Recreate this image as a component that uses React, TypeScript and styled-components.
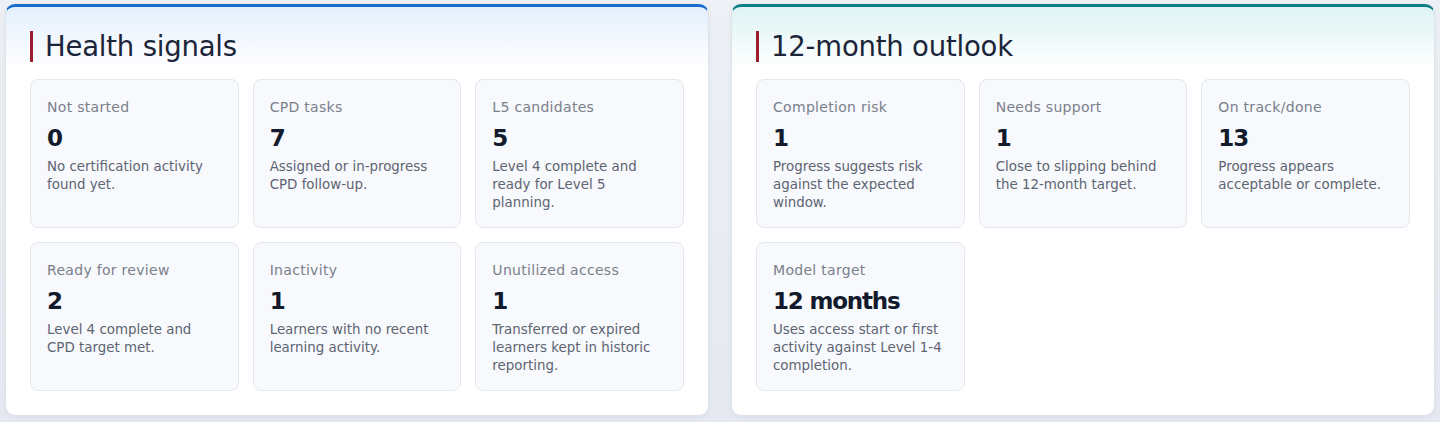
import styled, { createGlobalStyle } from "styled-components";

const GlobalStyle = createGlobalStyle`
    html, body {
        margin: 0;
        padding: 0;
        background: #e8ecf2;
        font-family: "DejaVu Sans", "Noto Sans", sans-serif;
    }
`;

type Signal = {
    label: string;
    value: string;
    text: string;
};

const health: Signal[] = [
    { label: "Not started", value: "0", text: "No certification activity found yet." },
    { label: "CPD tasks", value: "7", text: "Assigned or in-progress CPD follow-up." },
    { label: "L5 candidates", value: "5", text: "Level 4 complete and ready for Level 5 planning." },
    { label: "Ready for review", value: "2", text: "Level 4 complete and CPD target met." },
    { label: "Inactivity", value: "1", text: "Learners with no recent learning activity." },
    { label: "Unutilized access", value: "1", text: "Transferred or expired learners kept in historic reporting." },
];

const outlook: Signal[] = [
    { label: "Completion risk", value: "1", text: "Progress suggests risk against the expected window." },
    { label: "Needs support", value: "1", text: "Close to slipping behind the 12-month target." },
    { label: "On track/done", value: "13", text: "Progress appears acceptable or complete." },
    { label: "Model target", value: "12 months", text: "Uses access start or first activity against Level 1-4 completion." },
];

const Panel = function({ title, accent, tint, items }: { title: string; accent: string; tint: string; items: Signal[] }) {
    return (
        <PanelWrap $accent={accent} $tint={tint}>
            <Title>{title}</Title>
            <Grid>
                {items.map((item) => (
                    <Card key={item.label}>
                        <Label>{item.label}</Label>
                        <Value>{item.value}</Value>
                        <Desc>{item.text}</Desc>
                    </Card>
                ))}
            </Grid>
        </PanelWrap>
    );
};

const App = function() {
    return (
        <>
            <GlobalStyle />
            <Page>
                <Panel title="Health signals" accent="#1a6bd0" tint="#e4effc" items={health} />
                <Panel title="12-month outlook" accent="#0f7f86" tint="#def3f3" items={outlook} />
            </Page>
        </>
    );
};

export default App;

const Page = styled.div`
    display: grid;
    grid-template-columns: 1fr 1fr;
    gap: 22px;
    padding: 4px 5px 6px 5px;
    height: 422px;
    box-sizing: border-box;
    background: linear-gradient(180deg, #edf1f6 0%, #e6eaf0 100%);
`;

const PanelWrap = styled.section<{ $accent: string; $tint: string }>`
    box-sizing: border-box;
    height: 412px;
    border: 1px solid #dde3eb;
    border-top: 3px solid ${(p) => p.$accent};
    border-radius: 10px;
    background: linear-gradient(180deg, ${(p) => p.$tint} 0px, #ffffff 62px);
    box-shadow: 0 2px 6px rgba(30, 45, 70, 0.06);
    padding: 24px 24px 24px 24px;
`;

const Title = styled.h2`
    margin: 0 0 17px 0;
    padding-left: 12px;
    border-left: 3px solid #9b1c2c;
    font-size: 27.5px;
    font-weight: 400;
    line-height: 31px;
    color: #1b2438;
    letter-spacing: -0.2px;
`;

const Grid = styled.div`
    display: grid;
    grid-template-columns: repeat(3, 1fr);
    grid-auto-rows: 149px;
    gap: 14px;
`;

const Card = styled.div`
    box-sizing: border-box;
    background: #f7f9fc;
    border: 1px solid #e3e8ef;
    border-radius: 8px;
    padding: 17px 16px 16px 16px;
    display: flex;
    flex-direction: column;
`;

const Label = styled.div`
    font-size: 14px;
    line-height: 20px;
    letter-spacing: 0.3px;
    color: #7a808b;
`;

const Value = styled.div`
    margin-top: 7px;
    font-size: 23px;
    font-weight: 700;
    line-height: 28px;
    letter-spacing: -1.2px;
    color: #121a2b;
`;

const Desc = styled.div`
    margin-top: 6px;
    font-size: 13.4px;
    line-height: 18px;
    color: #5d6472;
`;
